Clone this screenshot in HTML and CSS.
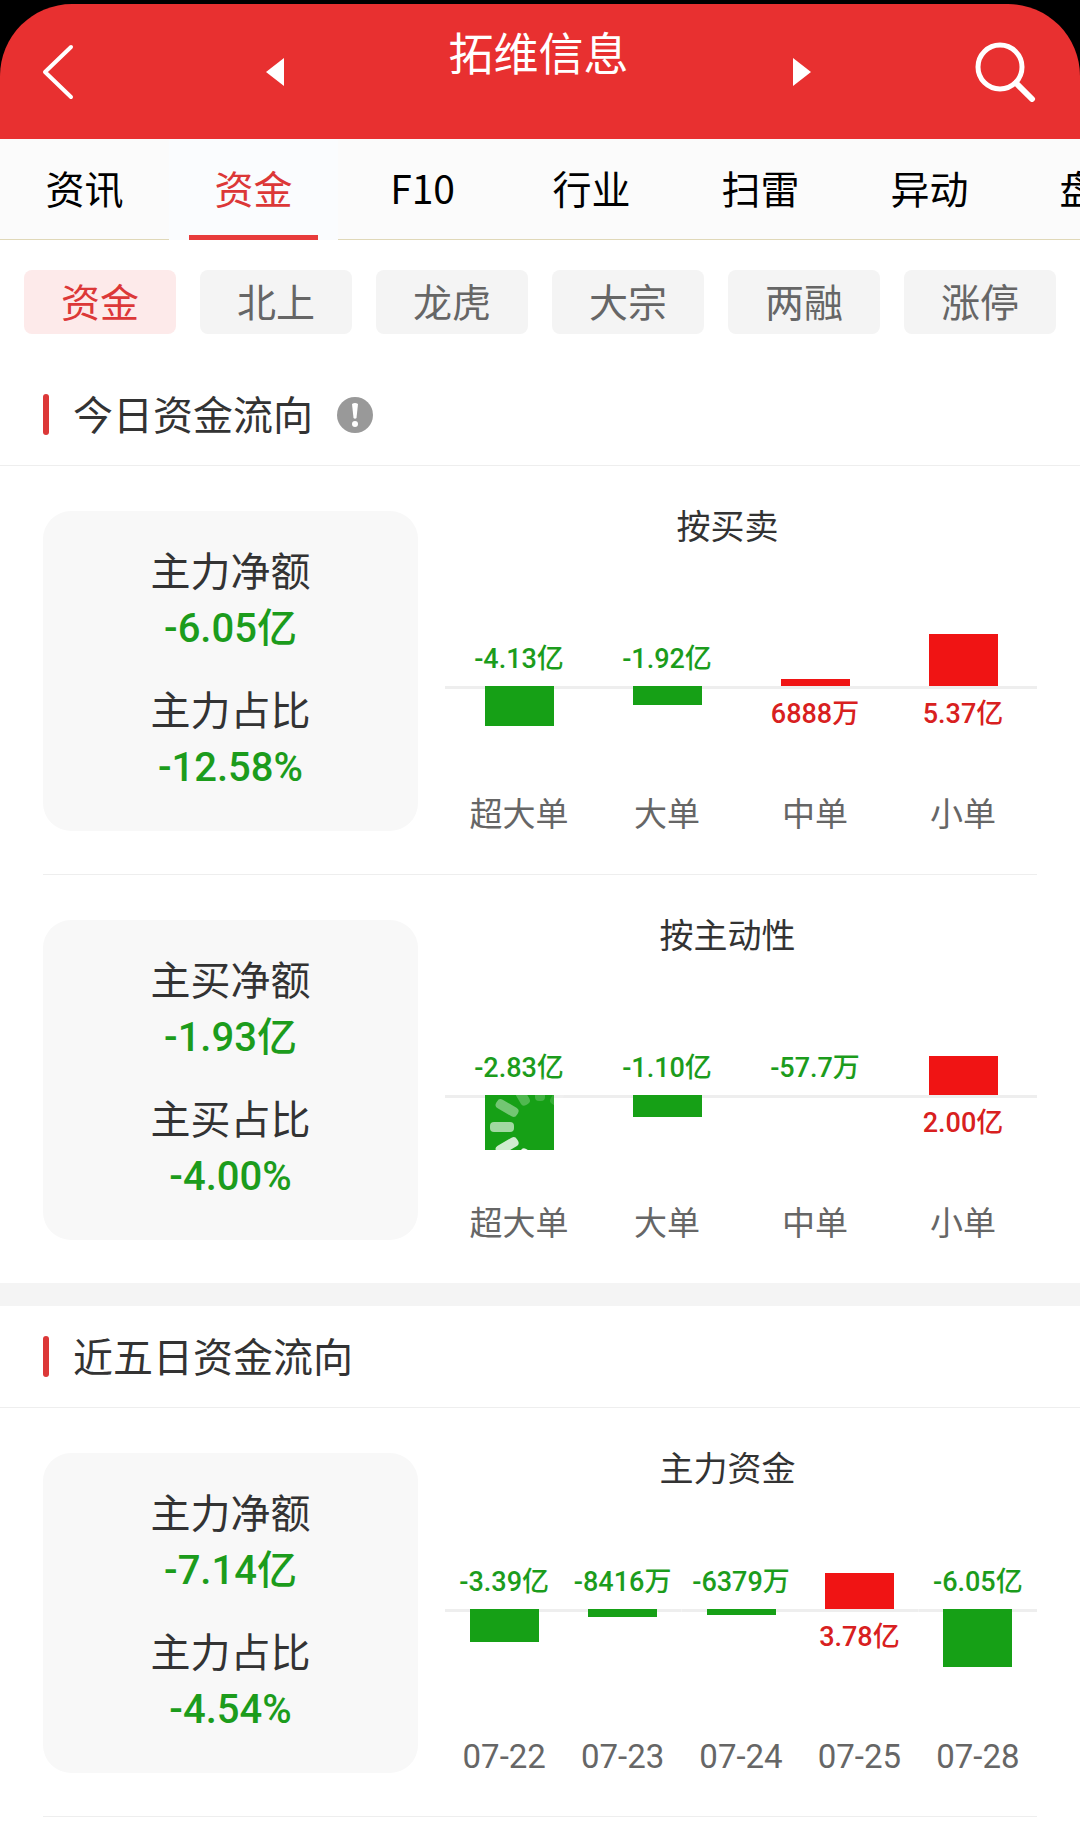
FILE: index.html
```html
<!DOCTYPE html>
<html lang="zh-CN">
<head>
    <meta charset="utf-8"/>
    <meta content="width=device-width, initial-scale=1.0" name="viewport"/>
    <title>拓维信息</title>
    <link rel="stylesheet" href="styles.css">
</head>
<body>
    <div class="top">
        <header class="header">
            <button type="button" class="icon-btn back" aria-label="返回">
                <svg width="32" height="56" viewBox="0 0 32 56" fill="none" stroke="#fff" stroke-width="4" stroke-linecap="round" stroke-linejoin="round">
                    <path d="M29 3 L3 28 L29 53"/>
                </svg>
            </button>
            <button type="button" class="icon-btn" aria-label="上一只">
                <svg width="18" height="28" viewBox="0 0 18 28" fill="#fff"><path d="M18 0 V28 L0 14 Z"/></svg>
            </button>
            <h1 class="title">拓维信息</h1>
            <button type="button" class="icon-btn" aria-label="下一只">
                <svg width="18" height="28" viewBox="0 0 18 28" fill="#fff"><path d="M0 0 V28 L18 14 Z"/></svg>
            </button>
            <button type="button" class="icon-btn search" aria-label="搜索">
                <svg width="62" height="60" viewBox="0 0 62 60" fill="none" stroke="#fff" stroke-linecap="round">
                    <circle cx="25" cy="25" r="22" stroke-width="5"/>
                    <path d="M41 41 L57 57" stroke-width="6"/>
                </svg>
            </button>
        </header>
    </div>

    <nav class="tabs">
        <a href="#" class="tab">资讯</a>
        <a href="#" class="tab active">资金</a>
        <a href="#" class="tab">F10</a>
        <a href="#" class="tab">行业</a>
        <a href="#" class="tab">扫雷</a>
        <a href="#" class="tab">异动</a>
        <a href="#" class="tab">盘口</a>
    </nav>

    <div class="chips">
        <button type="button" class="chip active">资金</button>
        <button type="button" class="chip">北上</button>
        <button type="button" class="chip">龙虎</button>
        <button type="button" class="chip">大宗</button>
        <button type="button" class="chip">两融</button>
        <button type="button" class="chip">涨停</button>
    </div>

    <section class="section">
        <div class="section-head">
            <h2>今日资金流向</h2>
            <button type="button" class="icon-btn" aria-label="说明">
                <svg width="36" height="36" viewBox="0 0 36 36">
                    <circle cx="18" cy="18" r="18" fill="#999"/>
                    <path d="M15 7 Q18 5 21 7 L19.500 21 Q18 22.500 16.500 21 Z" fill="#fff"/>
                    <circle cx="18" cy="27" r="3" fill="#fff"/>
                </svg>
            </button>
        </div>

        <div class="row">
            <dl class="card">
                <div><dt>主力净额</dt><dd>-6.05亿</dd></div>
                <div><dt>主力占比</dt><dd>-12.58%</dd></div>
            </dl>
            <div class="chart">
                <h3>按买卖</h3>
                <div class="cols">
                    <div class="col">
                        <div class="up"><span class="value fall">-4.13亿</span></div>
                        <div class="down"><div class="bar green" style="height:40px"></div></div>
                        <div class="name">超大单</div>
                    </div>
                    <div class="col">
                        <div class="up"><span class="value fall">-1.92亿</span></div>
                        <div class="down"><div class="bar green" style="height:19px"></div></div>
                        <div class="name">大单</div>
                    </div>
                    <div class="col">
                        <div class="up"><div class="bar red" style="height:7px"></div></div>
                        <div class="down"><span class="value rise">6888万</span></div>
                        <div class="name">中单</div>
                    </div>
                    <div class="col">
                        <div class="up"><div class="bar red" style="height:52px"></div></div>
                        <div class="down"><span class="value rise">5.37亿</span></div>
                        <div class="name">小单</div>
                    </div>
                </div>
            </div>
        </div>

        <div class="row last">
            <dl class="card">
                <div><dt>主买净额</dt><dd>-1.93亿</dd></div>
                <div><dt>主买占比</dt><dd>-4.00%</dd></div>
            </dl>
            <div class="chart">
                <h3>按主动性</h3>
                <div class="cols">
                    <div class="col">
                        <div class="up"><span class="value fall">-2.83亿</span></div>
                        <div class="down"><div class="bar green" style="height:55px"></div></div>
                        <div class="name">超大单</div>
                    </div>
                    <div class="col">
                        <div class="up"><span class="value fall">-1.10亿</span></div>
                        <div class="down"><div class="bar green" style="height:22px"></div></div>
                        <div class="name">大单</div>
                    </div>
                    <div class="col">
                        <div class="up"><span class="value fall">-57.7万</span></div>
                        <div class="down"><div class="bar" style="height:0px"></div></div>
                        <div class="name">中单</div>
                    </div>
                    <div class="col">
                        <div class="up"><div class="bar red" style="height:39px"></div></div>
                        <div class="down"><span class="value rise">2.00亿</span></div>
                        <div class="name">小单</div>
                    </div>
                </div>
            </div>
            <!-- loading spinner -->
            <svg class="spinner" width="100" height="100" viewBox="-50 -50 100 100" fill="#fff">
                <rect x="-50" y="-5" width="24" height="10" rx="4" opacity="0.6"/>
                <rect x="-50" y="-5" width="24" height="10" rx="4" opacity="0.4" transform="rotate(30)"/>
                <rect x="-50" y="-5" width="24" height="10" rx="4" opacity="0.25" transform="rotate(60)"/>
                <rect x="-50" y="-5" width="24" height="10" rx="4" opacity="0.2" transform="rotate(90)"/>
                <rect x="-50" y="-5" width="24" height="10" rx="4" opacity="0.15" transform="rotate(120)"/>
                <rect x="-50" y="-5" width="24" height="10" rx="4" opacity="0.1" transform="rotate(150)"/>
                <rect x="-50" y="-5" width="24" height="10" rx="4" opacity="0.8" transform="rotate(-30)"/>
                <rect x="-50" y="-5" width="24" height="10" rx="4" opacity="0.9" transform="rotate(-60)"/>
                <rect x="-50" y="-5" width="24" height="10" rx="4" transform="rotate(-90)"/>
            </svg>
        </div>
    </section>

    <section class="section">
        <div class="section-head">
            <h2>近五日资金流向</h2>
        </div>

        <div class="row">
            <dl class="card">
                <div><dt>主力净额</dt><dd>-7.14亿</dd></div>
                <div><dt>主力占比</dt><dd>-4.54%</dd></div>
            </dl>
            <div class="chart five-days">
                <h3>主力资金</h3>
                <div class="cols">
                    <div class="col">
                        <div class="up"><span class="value fall">-3.39亿</span></div>
                        <div class="down"><div class="bar green" style="height:33px"></div></div>
                        <div class="name">07-22</div>
                    </div>
                    <div class="col">
                        <div class="up"><span class="value fall">-8416万</span></div>
                        <div class="down"><div class="bar green" style="height:8px"></div></div>
                        <div class="name">07-23</div>
                    </div>
                    <div class="col">
                        <div class="up"><span class="value fall">-6379万</span></div>
                        <div class="down"><div class="bar green" style="height:6px"></div></div>
                        <div class="name">07-24</div>
                    </div>
                    <div class="col">
                        <div class="up"><div class="bar red" style="height:36px"></div></div>
                        <div class="down"><span class="value rise">3.78亿</span></div>
                        <div class="name">07-25</div>
                    </div>
                    <div class="col">
                        <div class="up"><span class="value fall">-6.05亿</span></div>
                        <div class="down"><div class="bar green" style="height:58px"></div></div>
                        <div class="name">07-28</div>
                    </div>
                </div>
            </div>
        </div>
    </section>
</body>
</html>
```
FILE: styles.css
```css
* {
    box-sizing: border-box;
}

body {
    margin: 0;
    background-color: #fff;
    color: #333;
    font-family: "Noto Sans CJK SC", sans-serif;
    font-size: 40px;
}

h1, h2, h3, dl, dd {
    margin: 0;
    font-weight: normal;
}

button {
    margin: 0;
    padding: 0;
    border: none;
    background: none;
    font-family: inherit;
    cursor: pointer;
}

svg {
    display: block;
}

/* header */
.top {
    background-color: #000;
    padding-top: 4px;
}

.header {
    display: grid;
    grid-template-columns: 230px 90px 1fr 90px 233px;
    align-items: center;
    justify-items: center;
    height: 135px;
    border-radius: 72px 72px 0 0;
    background-color: #e83030;
}

.back {
    justify-self: start;
    padding-left: 42px;
}

.search {
    justify-self: end;
    padding-right: 43px;
}

.title {
    align-self: start;
    padding-top: 20px;
    color: #fff;
    font-size: 45px;
    line-height: 56px;
}

/* tabs */
.tabs {
    display: flex;
    overflow: hidden;
    background-color: #fbfbfb;
}

.tab {
    position: relative;
    flex: 0 0 15.65vw;
    height: 101px;
    border-bottom: 1px solid #e0d8b8;
    color: #000;
    font-size: 39px;
    line-height: 97px;
    text-align: center;
    text-decoration: none;
}

.tab.active {
    background-color: #fafcfe;
    border-bottom-color: #fafcfe;
    color: #dc3838;
}

.tab.active::after {
    content: "";
    position: absolute;
    left: 12%;
    right: 12%;
    bottom: -1px;
    height: 5px;
    background-color: #e83c3c;
}

/* chips */
.chips {
    display: grid;
    grid-template-columns: repeat(6, 1fr);
    gap: 24px;
    padding: 30px 24px;
}

.chip {
    height: 64px;
    padding-bottom: 4px;
    border-radius: 8px;
    background-color: #f4f4f4;
    color: #666;
    font-size: 39px;
    line-height: 60px;
}

.chip.active {
    background-color: #fdeaea;
    color: #dc3838;
}

/* sections */
.section + .section {
    border-top: 23px solid #f4f4f4;
}

.section-head {
    display: flex;
    align-items: center;
    gap: 24px;
    height: 102px;
    padding: 0 43px;
    border-bottom: 1px solid #eee;
}

.section-head::before {
    content: "";
    width: 6px;
    height: 41px;
    border-radius: 3px;
    background-color: #dc3838;
}

.section-head h2 {
    padding-bottom: 4px;
    font-size: 40px;
    line-height: 56px;
}

.row {
    position: relative;
    display: flex;
    margin: 0 43px;
    padding: 45px 0 43px;
    border-bottom: 1px solid #eee;
}

.row.last {
    border-bottom: none;
}

.card {
    flex: 0 0 375px;
    display: flex;
    flex-direction: column;
    gap: 23px;
    padding: 30px 0 35px;
    border-radius: 28px;
    background-color: #f8f8f8;
    text-align: center;
    line-height: 56px;
}

.card dd {
    margin-top: 4px;
    color: #1c9c1c;
    font-family: Roboto, "Noto Sans CJK SC", sans-serif;
    font-weight: 500;
}

/* charts */
.chart {
    flex: 1;
    display: flex;
    flex-direction: column;
}

.chart h3 {
    font-size: 34px;
    line-height: 28px;
    text-align: center;
}

.cols {
    flex: 1;
    display: flex;
    margin-left: 27px;
}

.col {
    flex: 1 1 0;
    display: flex;
    flex-direction: column;
    text-align: center;
}

.up {
    display: flex;
    flex-direction: column;
    justify-content: flex-end;
    align-items: center;
    height: 147px;
}

.five-days .up {
    height: 128px;
}

.down {
    flex: 1;
    display: flex;
    flex-direction: column;
    align-items: center;
    background: linear-gradient(#eee, #eee) top / 100% 3px no-repeat;
}

.bar {
    width: 69px;
}

.green {
    background-color: #16a016;
}

.red {
    background-color: #f01414;
}

.value {
    padding: 13px 0 12px;
    font-family: Roboto, "Noto Sans CJK SC", sans-serif;
    font-size: 27px;
    font-weight: 500;
    line-height: 30px;
    white-space: nowrap;
}

.fall {
    color: #1c9c1c;
}

.rise {
    color: #d82020;
}

.name {
    color: #666;
    font-family: Roboto, "Noto Sans CJK SC", sans-serif;
    font-size: 33px;
    line-height: 32px;
}

.spinner {
    position: absolute;
    top: 202px;
    left: 50%;
    margin-left: -50px;
}
```
